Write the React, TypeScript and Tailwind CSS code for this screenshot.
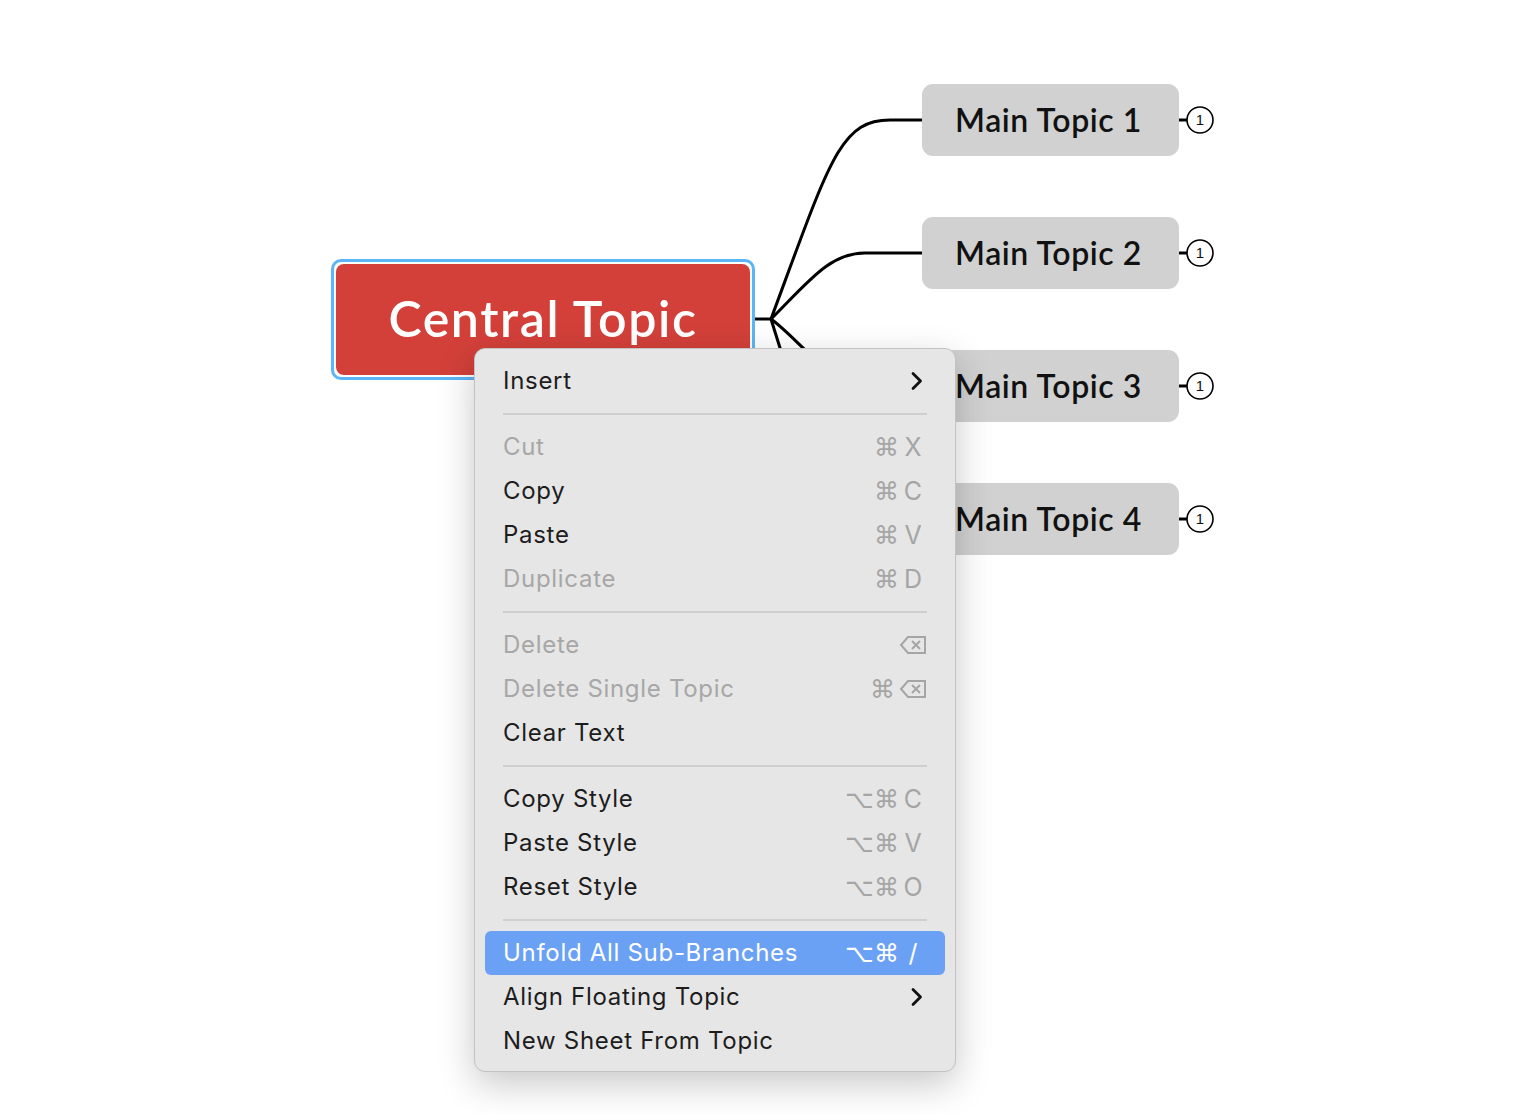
import React from 'react';

type Item = {
  label: string;
  disabled?: boolean;
  keys?: string[];
  submenu?: boolean;
  active?: boolean;
};

const groups: Item[][] = [
  [{ label: 'Insert', submenu: true }],
  [
    { label: 'Cut', disabled: true, keys: ['⌘', 'X'] },
    { label: 'Copy', keys: ['⌘', 'C'] },
    { label: 'Paste', keys: ['⌘', 'V'] },
    { label: 'Duplicate', disabled: true, keys: ['⌘', 'D'] },
  ],
  [
    { label: 'Delete', disabled: true, keys: ['del'] },
    { label: 'Delete Single Topic', disabled: true, keys: ['⌘', 'del'] },
    { label: 'Clear Text' },
  ],
  [
    { label: 'Copy Style', keys: ['⌥', '⌘', 'C'] },
    { label: 'Paste Style', keys: ['⌥', '⌘', 'V'] },
    { label: 'Reset Style', keys: ['⌥', '⌘', 'O'] },
  ],
  [
    { label: 'Unfold All Sub-Branches', active: true, keys: ['⌥', '⌘', '/'] },
    { label: 'Align Floating Topic', submenu: true },
    { label: 'New Sheet From Topic' },
  ],
];

const topics = [
  { label: 'Main Topic 1', top: 84 },
  { label: 'Main Topic 2', top: 217 },
  { label: 'Main Topic 3', top: 350 },
  { label: 'Main Topic 4', top: 483 },
];

const DeleteKey = () => (
  <svg width="28" height="20" viewBox="0 0 28 20" fill="none" stroke="currentColor" strokeWidth="2">
    <path d="M9 2 H26 V18 H9 L2 10 Z" strokeLinejoin="miter" />
    <path d="M13 6 L21 14 M21 6 L13 14" />
  </svg>
);

const Chevron = () => (
  <svg width="13" height="20" viewBox="0 0 13 20" fill="none" stroke="#111" strokeWidth="2.8" strokeLinecap="round" strokeLinejoin="round">
    <path d="M3 2.5 L10.5 10 L3 17.5" />
  </svg>
);

const Shortcut = ({ keys }: { keys: string[] }) => (
  <div className="flex items-center gap-[9px]">
    {keys.map((k, i) =>
      k === 'del' ? (
        <span key={i} className="-mr-[4px] flex items-center">
          <DeleteKey />
        </span>
      ) : (
        <span
          key={i}
          className="w-[20px] text-center text-[25px] leading-none"
          style={{ fontFamily: k === '⌘' || k === '⌥' ? '"DejaVu Sans", sans-serif' : undefined }}
        >
          {k}
        </span>
      )
    )}
  </div>
);

const MenuRow = ({ item }: { item: Item }) => {
  const color = item.active ? 'text-white' : item.disabled ? 'text-[#a7a7a7]' : 'text-[#1d1d1d]';
  return (
    <div
      className={`mx-[10px] flex h-[44px] items-center justify-between rounded-[6px] pl-[18px] pr-[22px] ${
        item.active ? 'bg-[#6aa1f5]' : ''
      }`}
    >
      <span className={`text-[24px] tracking-[0.7px] ${color}`}>{item.label}</span>
      {item.keys && (
        <span className={item.active ? 'text-white' : 'text-[#a5a5a5]'}>
          <Shortcut keys={item.keys} />
        </span>
      )}
      {item.submenu && <Chevron />}
    </div>
  );
};

export default function App() {
  return (
    <div className="relative h-[1114px] w-[1524px] overflow-hidden bg-white" style={{ fontFamily: 'Inter, "Liberation Sans", sans-serif' }}>
      {/* connectors */}
      <svg className="absolute left-0 top-0" width="1524" height="1114" fill="none" stroke="#000" strokeWidth="3">
        <path d="M753 319 L771 319" />
        <path d="M771 319 C830 160, 840 120, 890 120 L922 120" />
        <path d="M771 319 C810 280, 830 253, 865 253 L922 253" />
        <path d="M771 319 C800 340, 830 386, 870 386 L922 386" />
        <path d="M771 319 C790 380, 830 519, 880 519 L922 519" />
        {topics.map((t) => (
          <g key={t.top}>
            <path d={`M1179 ${t.top + 36} L1188 ${t.top + 36}`} strokeWidth="3" />
            <circle cx="1200" cy={t.top + 36} r="13" fill="#fff" strokeWidth="1.6" />
          </g>
        ))}
      </svg>

      {topics.map((t) => (
        <div key={t.top}>
          <div
            className="absolute left-[922px] flex h-[72px] w-[257px] items-center rounded-[11px] bg-[#d1d1d1] pl-[33px] text-[32px] font-semibold tracking-[0.6px] text-[#111]"
            style={{ top: t.top, fontFamily: 'Lato, sans-serif' }}
          >
            {t.label}
          </div>
          <div
            className="absolute left-[1187px] flex h-[26px] w-[26px] items-center justify-center text-[15px] text-[#111]"
            style={{ top: t.top + 23, fontFamily: '"Liberation Sans", sans-serif' }}
          >
            1
          </div>
        </div>
      ))}

      {/* central topic */}
      <div className="absolute left-[331px] top-[259px] h-[121px] w-[424px] rounded-[10px] border-[3px] border-[#5cb5f6] bg-white p-[2px]">
        <div
          className="flex h-full w-full items-center justify-center rounded-[8px] bg-[#d3403a] pb-[2px] text-[50px] font-semibold tracking-[1.6px] text-white"
          style={{ fontFamily: 'Lato, sans-serif' }}
        >
          Central Topic
        </div>
      </div>

      {/* context menu */}
      <div className="absolute left-[474px] top-[348px] w-[482px] rounded-[11px] border border-[#c2c2c2] bg-[#e6e6e6] pb-[8px] pt-[10px] shadow-[0_12px_36px_rgba(0,0,0,0.22)]">
        {groups.map((g, gi) => (
          <div key={gi}>
            {gi > 0 && (
              <div className="flex h-[22px] items-center">
                <div className="mx-[28px] h-[2px] w-full bg-[#cfcfcf]" />
              </div>
            )}
            {g.map((item) => (
              <MenuRow key={item.label} item={item} />
            ))}
          </div>
        ))}
      </div>
    </div>
  );
}
